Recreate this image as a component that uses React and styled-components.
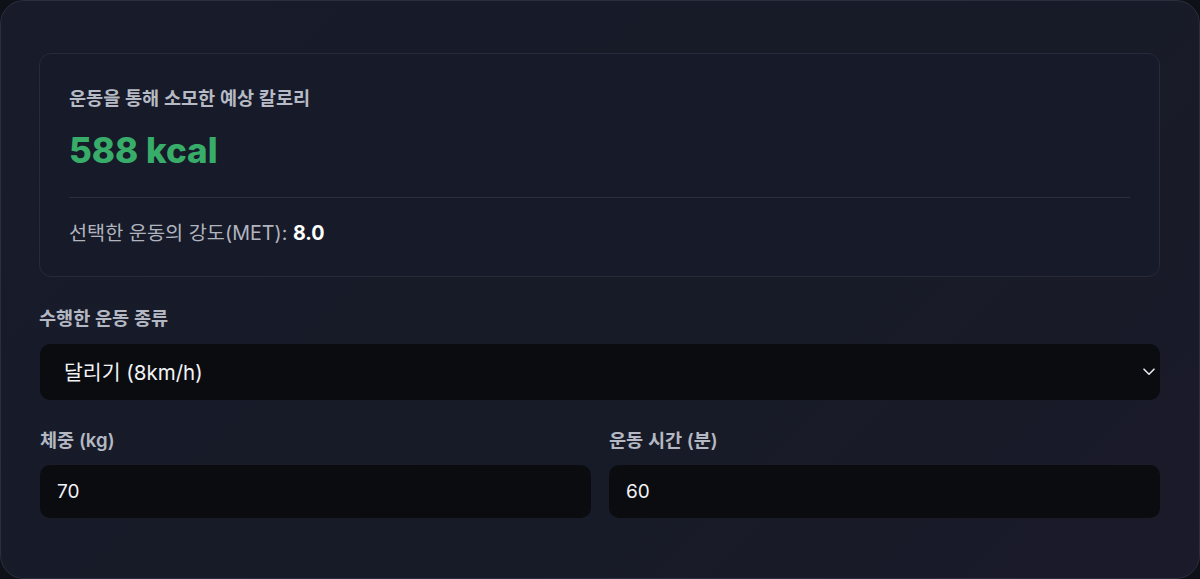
import React, { useState } from 'react';
import styled, { createGlobalStyle } from 'styled-components';

const GlobalStyle = createGlobalStyle`
  html, body {
    margin: 0;
    padding: 0;
    background: #0f1118;
  }

  * {
    box-sizing: border-box;
  }

  body {
    font-family: "Inter", "Noto Sans CJK KR", sans-serif;
    color: #e8eaef;
  }
`;

const exercises = [
  { label: '달리기 (8km/h)', met: 8.0 },
  { label: '걷기 (5km/h)', met: 3.5 },
  { label: '자전거 타기', met: 6.8 },
  { label: '수영', met: 7.0 },
];

const App = () => {
  const [exercise, setExercise] = useState(0);
  const [weight, setWeight] = useState('70');
  const [minutes, setMinutes] = useState('60');

  const met = exercises[exercise].met;
  const kcal = Math.round(met * 3.5 * Number(weight) / 200 * Number(minutes));

  return (
    <>
      <GlobalStyle />
      <Card>
        <ResultCard>
          <ResultTitle>운동을 통해 소모한 예상 칼로리</ResultTitle>
          <ResultValue>{kcal} kcal</ResultValue>
          <Divider />
          <MetLine>
            선택한 운동의 강도(MET): <strong>{met.toFixed(1)}</strong>
          </MetLine>
        </ResultCard>

        <Field>
          <Label htmlFor="exercise">수행한 운동 종류</Label>
          <SelectWrap>
            <Select
              id="exercise"
              value={exercise}
              onChange={(e) => setExercise(Number(e.target.value))}
            >
              {exercises.map((item, i) => (
                <option key={item.label} value={i}>{item.label}</option>
              ))}
            </Select>
            <Chevron width="12" height="8" viewBox="0 0 12 8" fill="none">
              <path d="M1 1.2 L6 6.2 L11 1.2" stroke="#e6e8ee" strokeWidth="1.6" strokeLinecap="round" strokeLinejoin="round" />
            </Chevron>
          </SelectWrap>
        </Field>

        <Row>
          <Field>
            <Label htmlFor="weight">체중 (kg)</Label>
            <Input id="weight" value={weight} onChange={(e) => setWeight(e.target.value)} />
          </Field>
          <Field>
            <Label htmlFor="minutes">운동 시간 (분)</Label>
            <Input id="minutes" value={minutes} onChange={(e) => setMinutes(e.target.value)} />
          </Field>
        </Row>
      </Card>
    </>
  );
};

export default App;

/* Styled Components */

const Card = styled.div`
  width: 1200px;
  height: 579px;
  padding: 52px 39px 0 38px;
  border: 1px solid #2a2e3e;
  border-radius: 24px;
  background: linear-gradient(135deg, #181b2a 0%, #171b27 60%, #1b1a2a 100%);
  display: flex;
  flex-direction: column;
`;

const ResultCard = styled.div`
  padding: 32px 29px 30px 29px;
  border: 1px solid #262a3a;
  border-radius: 12px;
  background: #171a28;
  margin-bottom: 29px;
`;

const ResultTitle = styled.div`
  font-size: 18.6px;
  line-height: 24px;
  font-weight: 600;
  color: #b6bac4;
`;

const ResultValue = styled.div`
  margin-top: 20px;
  font-size: 35px;
  line-height: 40px;
  font-weight: 800;
  color: #37ad69;
`;

const Divider = styled.div`
  height: 1px;
  margin: 27px 0 22px;
  background: #2a2e3d;
`;

const MetLine = styled.div`
  font-size: 19.7px;
  line-height: 26px;
  color: #b0b4be;

  strong {
    color: #ffffff;
    font-weight: 700;
  }
`;

const Field = styled.div`
  display: flex;
  flex-direction: column;
  gap: 14px;
`;

const Label = styled.label`
  font-size: 18.6px;
  line-height: 24px;
  font-weight: 600;
  color: #b4b8c2;
`;

const SelectWrap = styled.div`
  position: relative;
  margin-left: 1px;
`;

const Select = styled.select`
  appearance: none;
  width: 100%;
  height: 56px;
  padding: 0 40px 0 24px;
  border: none;
  border-radius: 10px;
  background: #0b0c10;
  color: #f2f3f6;
  font-family: inherit;
  font-size: 20.5px;
  outline: none;
`;

const Chevron = styled.svg`
  position: absolute;
  right: 5px;
  top: 24px;
  pointer-events: none;
`;

const Row = styled.div`
  display: grid;
  grid-template-columns: 1fr 1fr;
  gap: 18px;
  margin-top: 28px;
  padding-left: 1px;

  ${Field} {
    gap: 13px;
  }
`;

const Input = styled.input`
  width: 100%;
  height: 53px;
  padding: 0 17px;
  border: none;
  border-radius: 10px;
  background: #0b0c10;
  color: #f2f3f6;
  font-family: inherit;
  font-size: 19px;
  outline: none;
`;
